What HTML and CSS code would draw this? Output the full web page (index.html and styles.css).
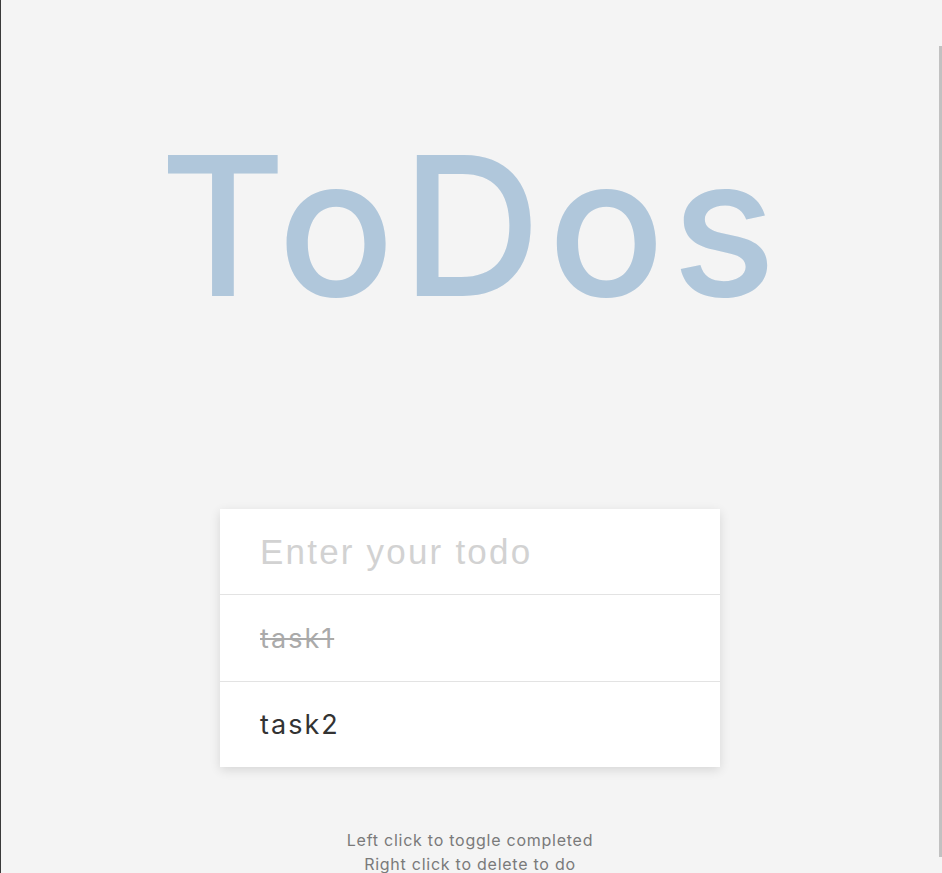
FILE: index.html
```html
<!DOCTYPE html>
<html>
<head>
<meta charset="utf-8">
<link rel="stylesheet" href="styles.css">
</head>
<body>
<div class="page">
  <h1 class="title">ToDos</h1>
  <div class="card">
    <input class="todo-input" type="text" placeholder="Enter your todo">
    <ul class="list">
      <li class="item done">task1</li>
      <li class="item">task2</li>
    </ul>
  </div>
  <div class="help">
    <p>Left click to toggle completed</p>
    <p>Right click to delete to do</p>
  </div>
</div>
<div class="scroll-thumb"></div>
</body>
</html>
```
FILE: styles.css
```css
html, body {
  margin: 0;
  padding: 0;
  height: 100%;
  overflow: hidden;
}
body {
  background: #f4f4f4;
  border-left: 1px solid #3a3a3a;
  box-sizing: border-box;
  font-family: "Inter", "Liberation Sans", sans-serif;
}
.page {
  display: flex;
  flex-direction: column;
  align-items: center;
  padding-right: 3px;
}
.title {
  margin: 96px 0 0 2px;
  font-family: "Inter", sans-serif;
  font-weight: 500;
  font-size: 194px;
  line-height: 260px;
  color: #b0c7db;
  letter-spacing: 6.5px;
}
.card {
  margin-top: 153px;
  width: 500px;
  background: #fff;
  box-shadow: 0 3px 10px rgba(0,0,0,0.12);
}
.todo-input {
  display: block;
  width: 100%;
  box-sizing: border-box;
  height: 86px;
  border: none;
  border-bottom: 1px solid #e3e3e3;
  padding: 0 40px;
  font-family: "Liberation Sans", Arial, sans-serif;
  font-size: 35px;
  letter-spacing: 2.2px;
  color: #333;
  outline: none;
  background: #fff;
}
.todo-input::placeholder {
  color: #d2d2d2;
}
.list {
  list-style: none;
  margin: 0;
  padding: 0;
}
.item {
  height: 86px;
  box-sizing: border-box;
  display: flex;
  align-items: center;
  padding: 0 40px;
  font-size: 27px;
  letter-spacing: 2px;
  color: #333;
  font-family: "Inter", sans-serif;
}
.item + .item {
  border-top: 1px solid #e3e3e3;
}
.item.done {
  color: #aaa;
  text-decoration: line-through;
}
.help {
  margin-top: 61px;
  text-align: center;
  color: #7a7a7a;
  font-size: 16px;
  letter-spacing: 0.75px;
  line-height: 24px;
}
.help p {
  margin: 0;
}
.scroll-thumb {
  position: fixed;
  right: 0;
  top: 46px;
  width: 3px;
  height: 811px;
  background: #c1c1c1;
}
```
